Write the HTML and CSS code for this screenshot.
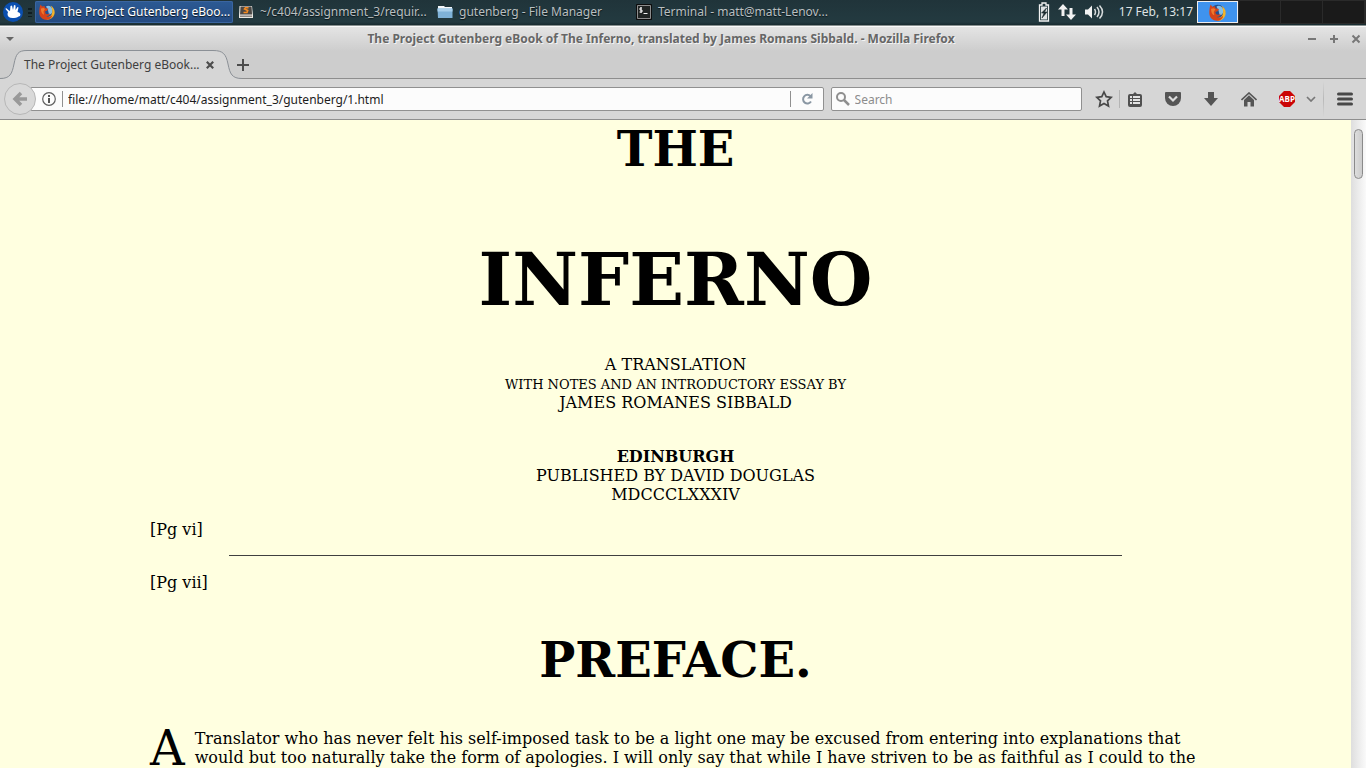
FILE: index.html
```html
<!DOCTYPE html>
<html lang="en">
<head>
<meta charset="utf-8">
<title>The Project Gutenberg eBook of The Inferno</title>
<link rel="stylesheet" href="styles.css">
</head>
<body>
<svg class="defs" aria-hidden="true">
  <symbol id="firefox" viewBox="0 0 16 16">
    <circle cx="8.200" cy="7.700" r="7" fill="#24508f"/>
    <path d="M7 2.500C9 .8 13 2 13.500 6c.2 3-1.500 4.500-3.500 4.500L9 6z" fill="#86bfe6"/>
    <path d="M11.500 1.500C15 3.500 16.300 7 15.400 10.300 14.300 14 11 16 7.500 15.700L8 13c3 0 5-2 5.200-4.500.3-2.500-.2-5-1.700-7z" fill="#f4b52a"/>
    <path d="M1.500.5l1.700 2L5.500 2 6 4l3.500.8L8 6.800l-2 .7.500 2c1.500 1.200 3.300.5 4.300-.3 0 2-1.500 3-3.500 3C9 13.500 12 13 13.300 10.800c0 3-3 5-5.800 5C3.500 15.700.6 13 .3 9 .2 6 .6 3 1.500.5z" fill="#d5441a"/>
    <path d="M2 4.500l2.500-.5L6 5 4.500 7.500 5 10.500C3.500 10.500 1.800 8 2 4.500z" fill="#ee7a2c"/>
  </symbol>
</svg>

<header class="panel">
  <button class="panel-menu" aria-label="Applications menu">
    <svg width="20" height="20" viewBox="0 0 20 20"><circle cx="10" cy="10" r="10" fill="#0a4fb0"/><path d="M3 6l3 2.500L7 9 7.500 4 9 3.500l1 4.500 1-5 1.500.5V8l2-3 1 .5-1 4.500c2.500.5 3.500 2 2.500 4-2 .5-3 2-6 2-4 .5-6.500-1-6.500-4L5 10 2.500 7z" fill="#fff"/></svg>
  </button>
  <span class="grip"></span>
  <nav class="tasks">
    <button class="task task-active"><svg width="16" height="16"><use href="#firefox"/></svg><span>The Project Gutenberg eBoo...</span></button>
    <button class="task"><svg width="16" height="16" viewBox="0 0 16 16"><path d="M1.500 2h12.500l1 9v3H1v-3z" fill="#ece9e4"/><path d="M2.500 2.500h11l.5 8H2z" fill="#4b4744"/><path d="M2 11.500h12V13H2z" fill="#8a8581"/><path d="M10.500 3.700H7.500L6.500 5l3.200 1.500-.7 2H5.500" fill="none" stroke="#f58a1f" stroke-width="1.600"/></svg><span>~/c404/assignment_3/requir...</span></button>
    <button class="task"><svg width="16" height="16" viewBox="0 0 16 16"><path d="M1 2h6l1 1h7v4H1z" fill="#f4f7fa"/><path d="M.5 4.500h15V14H1z" fill="#7fb2d8"/><path d="M.5 4.500h15v3H.6z" fill="#a9d0ec"/></svg><span>gutenberg - File Manager</span></button>
    <button class="task"><svg width="16" height="16" viewBox="0 0 16 16"><path d="M.5.500h15v15H.5z" fill="#202423" stroke="#0c0d0d"/><path d="M1.500 1.500h13v13h-13z" fill="none" stroke="#8c8c8c"/><path d="M6 4H4v2h2v2H3.500M5 3v6M7.500 9.500h4" fill="none" stroke="#f1f1f1"/></svg><span>Terminal - matt@matt-Lenov...</span></button>
  </nav>
  <div class="tray">
    <svg width="12" height="20" viewBox="0 0 12 20"><path d="M4 1h4v2h2.500v16h-9V3H4z" fill="none" stroke="#f2f2f2" stroke-width="1.300"/><path d="M3 4.500h6v13H3z" fill="#dfe3e4"/><path d="M8.500 6L3.500 11H6l-2 5 5-6H6.500z" fill="#1c2c31" stroke="#1c2c31" stroke-width=".6"/></svg>
    <svg width="18" height="18" viewBox="0 0 18 18"><path d="M5 1L0 6.500h3.500V13h3V6.500H10zM13 17l5-5.500h-3.500V5h-3v6.500H8z" fill="#f2f2f2"/></svg>
    <svg width="20" height="18" viewBox="0 0 20 18"><path d="M1 6.500h3l4-4v13l-4-4H1z" fill="#f2f2f2"/><path d="M10.500 6q2 3 0 6M13 4q4 5 0 10M15.500 2.500q6 6.500 0 13" fill="none" stroke="#d8dcdd" stroke-width="1.500"/></svg>
  </div>
  <time class="clock">17 Feb, 13:17</time>
  <div class="pager">
    <button class="desk desk-active" aria-label="Workspace 1"><svg width="17" height="17"><use href="#firefox"/></svg></button>
    <button class="desk" aria-label="Workspace 2"></button>
    <button class="desk" aria-label="Workspace 3"></button>
    <button class="desk" aria-label="Workspace 4"></button>
  </div>
</header>

<div class="titlebar">
  <button class="win-btn" aria-label="Window menu"><svg width="10" height="10" viewBox="0 0 10 10"><path d="M1 3h8L5 7z" fill="#666"/></svg></button>
  <div class="win-title">The Project Gutenberg eBook of The Inferno, translated by James Romans Sibbald. - Mozilla Firefox</div>
  <div class="win-controls">
    <button class="win-btn" aria-label="Minimize"><svg width="10" height="10" viewBox="0 0 10 10"><path d="M1 5h8" stroke="#777" stroke-width="2"/></svg></button>
    <button class="win-btn" aria-label="Maximize"><svg width="10" height="10" viewBox="0 0 10 10"><path d="M1 5h8M5 1v8" stroke="#777" stroke-width="2"/></svg></button>
    <button class="win-btn" aria-label="Close window"><svg width="10" height="10" viewBox="0 0 10 10"><path d="M1.500 1.500l7 7m0-7l-7 7" stroke="#777" stroke-width="2"/></svg></button>
  </div>
</div>

<div class="tabs">
  <div class="tab">
    <svg class="tab-shape" width="242" height="30" viewBox="0 0 242 30"><path d="M0 28.500C10 28.500 12 24 14 14 16 4 18 .5 27 .5H213C223 .5 226 4 228 14 230 24 232 28.500 242 28.500V30H0z" fill="#d6d6d6"/><path d="M0 28.500C10 28.500 12 24 14 14 16 4 18 .5 27 .5H213C223 .5 226 4 228 14 230 24 232 28.500 242 28.500" fill="none" stroke="#8b9096"/></svg>
    <a class="tab-label" href="#book">The Project Gutenberg eBook...</a>
    <button class="tab-close" aria-label="Close tab"><svg width="8" height="8" viewBox="0 0 8 8"><path d="M.8.800l6.400 6.400m0-6.400L.8 7.200" stroke="#4d4d4d" stroke-width="2.200"/></svg></button>
  </div>
  <button class="tab-new" aria-label="New tab"><svg width="12" height="12" viewBox="0 0 12 12"><path d="M0 6h12M6 0v12" stroke="#4c4c4c" stroke-width="2"/></svg></button>
</div>

<div class="navbar">
  <button class="back" aria-label="Back"><svg width="16" height="16" viewBox="0 0 16 16"><path d="M15 8H4M9 2L3 8l6 6" fill="none" stroke="#999" stroke-width="3.500"/></svg></button>
  <div class="field url">
    <svg width="14" height="14" viewBox="0 0 14 14"><circle cx="7" cy="7" r="6.300" fill="none" stroke="#606060" stroke-width="1.200"/><path d="M7 3v2M7 6v5" stroke="#555" stroke-width="2"/></svg>
    <span class="field-line"></span>
    <input type="text" aria-label="Address" value="file:///home/matt/c404/assignment_3/gutenberg/1.html">
    <span class="field-line"></span>
    <button class="reload" aria-label="Reload"><svg width="12" height="12" viewBox="0 0 12 12"><path d="M9.500 3.200A4.300 4.300 0 1 0 10 8.500" fill="none" stroke="#8a97a3" stroke-width="2"/><path d="M11.500 0v5.500H6z" fill="#8a97a3"/></svg></button>
  </div>
  <div class="field search">
    <svg width="14" height="14" viewBox="0 0 14 14"><circle cx="5" cy="5" r="4" fill="none" stroke="#8f8f8f" stroke-width="2"/><path d="M8 8l5 5" stroke="#8f8f8f" stroke-width="2.500"/></svg>
    <input type="text" aria-label="Search" placeholder="Search">
  </div>
  <div class="tools">
    <button class="tool tool-star" aria-label="Bookmark"><svg width="18" height="18" viewBox="0 0 18 18"><path d="M9 2l2.200 4.700 5 .6-3.700 3.500 1 5.200L9 13.500 4.500 16l1-5.200L1.800 7.300l5-.6z" fill="none" stroke="#484848" stroke-width="1.700"/></svg></button>
    <button class="tool tool-list" aria-label="Bookmarks list"><svg width="14" height="15" viewBox="0 0 14 15"><path d="M2 2h3l2-2 2 2h3q2 0 2 2v9q0 2-2 2H2q-2 0-2-2V4q0-2 2-2z" fill="#505050"/><path d="M2 4h2v2H2zM5 4h7v2H5zM2 7h2v2H2zM5 7h7v2H5zM2 10h2v2H2zM5 10h7v2H5z" fill="#e2e2e2"/></svg></button>
    <button class="tool" aria-label="Pocket"><svg width="16" height="14" viewBox="0 0 16 14"><path d="M1 0h14q1 0 1 1v5a8 8 0 0 1-16 0V1q0-1 1-1z" fill="#555"/><path d="M4 4.500l4 4 4-4" fill="none" stroke="#ddd" stroke-width="2.200"/></svg></button>
    <button class="tool" aria-label="Downloads"><svg width="14" height="14" viewBox="0 0 14 14"><path d="M4 0h6v6h4l-7 8-7-8h4z" fill="#555"/></svg></button>
    <button class="tool" aria-label="Home"><svg width="16" height="15" viewBox="0 0 16 15"><path d="M.5 8L8 1l7.500 7" fill="none" stroke="#555" stroke-width="1.600"/><path d="M3 8l5-4.700L13 8v6.500H9.500V10h-3v4.500H3z" fill="#555"/></svg></button>
    <button class="tool abp" aria-label="Adblock Plus"><svg width="16" height="16" viewBox="0 0 16 16"><path d="M5 0h6l5 5v6l-5 5H5l-5-5V5z" fill="#cb0505"/><text x="8" y="11" text-anchor="middle" class="abp-text">ABP</text></svg></button>
    <button class="tool tool-drop" aria-label="Adblock options"><svg width="10" height="6" viewBox="0 0 10 6"><path d="M1 1l4 4 4-4" fill="none" stroke="#777" stroke-width="1.700"/></svg></button>
    <button class="tool tool-menu" aria-label="Open menu"><svg width="16" height="14" viewBox="0 0 16 14"><path d="M1.500 2h13M1.500 7h13M1.500 12h13" stroke="#484848" stroke-width="3" stroke-linecap="round"/></svg></button>
  </div>
</div>

<div class="viewport">
  <main class="book" id="book">
    <h1 class="the">THE</h1>
    <h1 class="inferno">INFERNO</h1>
    <p class="center credits">A TRANSLATION<br><small>WITH NOTES AND AN INTRODUCTORY ESSAY BY</small><br>JAMES ROMANES SIBBALD</p>
    <p class="center imprint"><b>EDINBURGH</b><br>PUBLISHED BY DAVID DOUGLAS<br>MDCCCLXXXIV</p>
    <p class="page-no">[Pg vi]</p>
    <hr class="rule">
    <p class="page-no">[Pg vii]</p>
    <h2 class="preface">PREFACE.</h2>
    <p class="body-text"><span class="drop-cap">A</span> Translator who has never felt his self-imposed task to be a light one may be excused from entering into explanations that would but too naturally take the form of apologies. I will only say that while I have striven to be as faithful as I could to the</p>
  </main>
  <div class="scrollbar"><div class="thumb"></div></div>
</div>
</body>
</html>
```

FILE: styles.css
```css
* { box-sizing: border-box; }

body {
  margin: 0;
  height: 100vh;
  display: flex;
  flex-direction: column;
  overflow: hidden;
  font: 12px/16px "Noto Sans", sans-serif;
}

button {
  display: flex;
  align-items: center;
  justify-content: center;
  padding: 0;
  border: 0;
  background: none;
  color: inherit;
  font: inherit;
}

svg { flex: none; }
.defs { position: absolute; width: 0; height: 0; }

/* Desktop panel */
.panel {
  display: flex;
  align-items: center;
  flex: none;
  height: 26px;
  padding: 0 0 2px 3px;
  background: linear-gradient(#20343a, #233a40 22px, #182b30 25px, #88908f 25px);
  color: #b9bfc0;
}
.grip {
  width: 4px;
  height: 9px;
  margin: 0 3px 0 5px;
  background: repeating-linear-gradient(#0f1d21 0 2px, transparent 2px 4px);
}
.tasks { display: flex; flex: 1; gap: 1px; min-width: 0; }
.task {
  flex: 0 1 198px;
  min-width: 0;
  height: 22px;
  gap: 6px;
  padding: 0 4px;
  justify-content: flex-start;
  white-space: nowrap;
  text-shadow: 0 1px 1px #0b1518;
}
.task-active {
  border-radius: 2px;
  background: linear-gradient(#2c5a94, #244a80);
  box-shadow: inset 0 0 0 1px #3a65a0;
  color: #fff;
}
.tray { display: flex; align-items: center; gap: 8px; }
.clock { padding: 0 4px 0 15px; color: #dfe3e4; white-space: nowrap; }
.pager { display: flex; height: 24px; gap: 1px; padding: 1px 2px 0 0; background: #2a2a2a; }
.desk { width: 41px; height: 22px; background: #1a1a1a; }
.desk-active { background: #3f93ee; border: 1px solid #eee; }

/* Window frame */
.titlebar {
  display: flex;
  align-items: center;
  flex: none;
  height: 25px;
  padding: 0 5px;
  border-top: 1px solid #fafafa;
  background: linear-gradient(#e4e4e4, #cdcdcd);
}
.win-title {
  flex: 1;
  color: #666;
  font-weight: bold;
  text-align: center;
  text-shadow: 1px 1px 0 #f4f4f4;
}
.win-controls { display: flex; gap: 12px; }

.tabs {
  display: flex;
  align-items: flex-start;
  flex: none;
  height: 28px;
  background: linear-gradient(#cdcdcd 27px, #8e8e8e 27px);
}
.tab {
  position: relative;
  display: flex;
  align-items: center;
  width: 233px;
  height: 28px;
  padding-left: 24px;
  gap: 6px;
}
.tab-shape { position: absolute; left: 0; top: -1px; }
.tab-label { position: relative; color: #404040; text-decoration: none; white-space: nowrap; }
.tab-close { position: relative; }
.tab-new { height: 28px; padding: 0 4px; position: relative; }

/* Navigation toolbar */
.navbar {
  display: flex;
  align-items: center;
  flex: none;
  height: 41px;
  padding-left: 4px;
  border-bottom: 1px solid #8e8e8e;
  background: #d6d6d6;
}
.back {
  position: relative;
  flex: none;
  width: 32px;
  height: 32px;
  border: 1px solid #b7b7b7;
  border-radius: 50%;
  background: #d9d9d9;
}
.field {
  display: flex;
  align-items: center;
  min-width: 0;
  height: 24px;
  border: 1px solid #909090;
  border-radius: 2px;
  background: #fcfcfc;
}
.field input {
  flex: 1;
  min-width: 0;
  padding: 1px 0 0;
  border: 0;
  outline: 0;
  background: none;
  color: #1c1c1c;
  font: inherit;
}
.field input::placeholder { color: #8c8c8c; opacity: 1; }
.url { flex: 795; margin-left: -6px; padding-left: 11px; }
.url input { padding-left: 5px; }
.field-line { width: 1px; height: 16px; margin-left: 6px; background: #909090; }
.reload { width: 32px; }
.search { flex: 250; margin-left: 7px; padding-left: 4px; gap: 5px; }
.tools { display: flex; flex: none; padding-left: 7px; align-items: center; }
.tool { width: 38px; height: 40px; }
.tool-star { width: 30px; }
.tool-list {
  width: 32px;
  margin-right: 3px;
  background: linear-gradient(#b4b4b4, #b4b4b4) left center / 1px 18px no-repeat;
}
.tool-drop { width: 9px; margin-right: 8px; }
.tool-menu {
  width: 43px;
  background: linear-gradient(#d6d6d6, #b8b8b8, #d6d6d6) left center / 1px 36px no-repeat;
}
.abp-text { fill: #fff; font: bold 8px "Open Sans", sans-serif; }

/* Page */
.viewport {
  display: flex;
  flex: 1;
  min-height: 0;
  overflow: hidden;
  background: #ffffe0;
}
.book {
  flex: 1;
  padding: 1px 150px 0;
  color: #000;
  font: 16px/19px "DejaVu Serif", serif;
}
.book h1, .book h2, .book p { margin: 0; }
.center { text-align: center; }
.the, .inferno, .preface { text-align: center; font-weight: bold; }
.the { font-size: 48px; line-height: 56px; }
.book .inferno { margin-top: 61px; font-size: 72px; line-height: 84px; }
.book .credits { margin-top: 33px; }
.credits small { font-size: 13px; line-height: 1; }
.book .imprint { margin-top: 35px; }
.book .page-no { margin-top: 16px; }
.rule { width: 85%; height: 1px; margin: 16px auto 0; border: 0; background: #404040; }
.book .rule + .page-no { margin-top: 17px; }
.book .preface { margin-top: 40px; font-size: 48px; line-height: 56px; }
.book .body-text { margin-top: 41px; }
.drop-cap { float: left; margin-right: 10px; font-size: 48px; line-height: 38px; }
.scrollbar {
  flex: none;
  width: 15px;
  padding: 9px 1px 0 3px;
  background: linear-gradient(90deg, #dedede, #fafafa);
}
.thumb {
  width: 9px;
  height: 50px;
  border: 1px solid #8a8a8a;
  border-radius: 5px;
  background: linear-gradient(90deg, #ddd, #ccc);
}
```
